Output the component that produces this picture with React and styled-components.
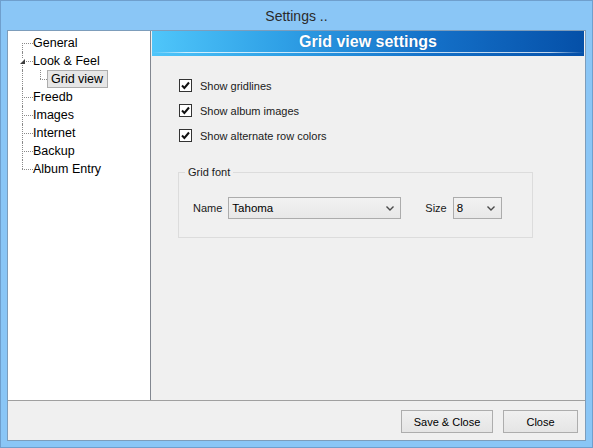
import React from 'react';
import styled, { createGlobalStyle } from 'styled-components';

const GlobalStyle = createGlobalStyle`
  html, body {
    margin: 0;
    padding: 0;
    background: #8ac6f6;
  }
  * {
    box-sizing: border-box;
  }
`;

const treeItems = [
  { label: 'General', first: true },
  { label: 'Look & Feel', expanded: true },
  { label: 'Grid view', child: true, selected: true },
  { label: 'Freedb' },
  { label: 'Images' },
  { label: 'Internet' },
  { label: 'Backup' },
  { label: 'Album Entry', last: true },
];

const options = ['Show gridlines', 'Show album images', 'Show alternate row colors'];

const Chevron = () => (
  <svg width="8" height="5" viewBox="0 0 8 5">
    <path d="M0.5 0.5 L4 4 L7.5 0.5" fill="none" stroke="#4a4a4a" strokeWidth="1.4" />
  </svg>
);

const Check = () => (
  <svg width="11" height="11" viewBox="0 0 11 11">
    <path d="M2 5.5 L4.4 8 L9 2.5" fill="none" stroke="#111" strokeWidth="2" />
  </svg>
);

const App = () => {
  return (
    <>
      <GlobalStyle />
      <Frame>
        <TitleBar>Settings ..</TitleBar>
        <Client>
          <Main>
            <Tree>
              {treeItems.map(item => (
                <TreeRow key={item.label}>
                  {item.child && <Guide />}
                  <Connector
                    $w={item.child ? 7 : 11}
                    $first={item.first}
                    $last={item.last || item.child}
                  >
                    {item.expanded && <Expander />}
                  </Connector>
                  <TreeLabel $selected={item.selected}>{item.label}</TreeLabel>
                </TreeRow>
              ))}
            </Tree>
            <Panel>
              <Header>Grid view settings</Header>
              <Body>
                <CheckList>
                  {options.map(o => (
                    <CheckRow key={o}>
                      <Box>
                        <Check />
                      </Box>
                      {o}
                    </CheckRow>
                  ))}
                </CheckList>
                <Group>
                  <Legend>Grid font</Legend>
                  <FieldRow>
                    <FieldLabel>Name</FieldLabel>
                    <Select $w={173}>
                      Tahoma
                      <Chevron />
                    </Select>
                    <FieldLabel $gap={24}>Size</FieldLabel>
                    <Select $w={49}>
                      8
                      <Chevron />
                    </Select>
                  </FieldRow>
                </Group>
              </Body>
            </Panel>
          </Main>
          <Footer>
            <Button $w={92}>Save &amp; Close</Button>
            <Button $w={75}>Close</Button>
          </Footer>
        </Client>
      </Frame>
    </>
  );
};

export default App;

const Frame = styled.div`
  width: 593px;
  height: 448px;
  background: #8ac6f6;
  border: 1px solid #6f9fcd;
  display: flex;
  flex-direction: column;
  font-family: 'Liberation Sans', Arial, sans-serif;
`;

const TitleBar = styled.div`
  height: 29px;
  padding-top: 2px;
  line-height: 27px;
  text-align: center;
  font-size: 14px;
  color: #2a2a2a;
`;

const Client = styled.div`
  flex: 1;
  margin: 0 6px 6px 6px;
  border: 1px solid #7d9dbb;
  background: #f0f0f0;
  display: flex;
  flex-direction: column;
`;

const Main = styled.div`
  height: 370px;
  display: flex;
  border-bottom: 1px solid #a0a0a0;
`;

const Tree = styled.div`
  width: 143px;
  flex: none;
  background: #fff;
  border-right: 1px solid #828790;
  padding-top: 3px;
  font-size: 12.5px;
  color: #000;
`;

const TreeRow = styled.div`
  height: 18px;
  display: flex;
  align-items: stretch;
  padding-left: 14px;
`;

const Guide = styled.span`
  width: 18px;
  flex: none;
  border-left: 1px dotted #8a8a8a;
`;

const Connector = styled.span`
  position: relative;
  width: ${p => p.$w}px;
  flex: none;

  &::before {
    content: '';
    position: absolute;
    left: 0;
    top: ${p => (p.$first ? '50%' : '0')};
    bottom: ${p => (p.$last ? '50%' : '0')};
    border-left: 1px dotted #8a8a8a;
  }

  &::after {
    content: '';
    position: absolute;
    left: 0;
    right: 0;
    top: 50%;
    border-top: 1px dotted #8a8a8a;
  }
`;

const Expander = styled.span`
  position: absolute;
  left: -3px;
  top: 6px;
  width: 7px;
  height: 7px;
  background: #fff;
  z-index: 1;

  &::after {
    content: '';
    position: absolute;
    left: 1px;
    top: 1px;
    border-style: solid;
    border-width: 0 0 5px 5px;
    border-color: transparent transparent #3c3c3c transparent;
  }
`;

const TreeLabel = styled.span`
  display: flex;
  align-items: center;
  height: 18px;
  padding: ${p => (p.$selected ? '0 4px 0 3px' : '0 2px 0 0')};
  border: 1px solid ${p => (p.$selected ? '#adadad' : 'transparent')};
  border-width: ${p => (p.$selected ? '1px' : '0')};
  background: ${p => (p.$selected ? '#e6e6e6' : 'transparent')};
  white-space: nowrap;
`;

const Panel = styled.div`
  flex: 1;
  display: flex;
  flex-direction: column;
  padding: 0 1px;
`;

const Header = styled.div`
  height: 25px;
  line-height: 22px;
  text-align: center;
  color: #fff;
  font-weight: bold;
  font-size: 16px;
  text-shadow: 0 0 1px rgba(0, 40, 100, 0.4);
  background:
    linear-gradient(
        to right,
        rgba(255, 255, 255, 0) 0%,
        rgba(255, 255, 255, 0.75) 8%,
        rgba(255, 255, 255, 0.75) 92%,
        rgba(255, 255, 255, 0) 100%
      )
      0 21px / 100% 1px no-repeat,
    linear-gradient(to right, #4fc6fa 0%, #2fa0e6 30%, #1470c8 65%, #0550a8 100%);
`;

const Body = styled.div`
  padding: 17px 0 0 26px;
  font-size: 11px;
  color: #1a1a1a;
`;

const CheckList = styled.div`
  display: flex;
  flex-direction: column;
`;

const CheckRow = styled.label`
  height: 25px;
  display: flex;
  align-items: center;
  gap: 8px;
  padding-left: 1px;
`;

const Box = styled.span`
  width: 13px;
  height: 13px;
  border: 1px solid #333;
  background: #fff;
  display: flex;
  align-items: center;
  justify-content: center;
`;

const Group = styled.fieldset`
  margin: 18px 0 0 0;
  width: 355px;
  border: 1px solid #dcdcdc;
  padding: 18px 10px 18px 14px;
`;

const Legend = styled.legend`
  padding: 0 3px;
  margin-left: -8px;
  font-size: 11px;
  line-height: 13px;
`;

const FieldRow = styled.div`
  display: flex;
  align-items: center;
`;

const FieldLabel = styled.span`
  margin-left: ${p => p.$gap || 0}px;
  margin-right: 6px;
`;

const Select = styled.div`
  width: ${p => p.$w}px;
  height: 22px;
  border: 1px solid #acacac;
  background: linear-gradient(to bottom, #f2f2f2, #e8e8e8);
  display: flex;
  align-items: center;
  justify-content: space-between;
  padding: 0 6px 0 3px;
  font-size: 11.5px;
  color: #000;
`;

const Footer = styled.div`
  flex: 1;
  display: flex;
  justify-content: flex-end;
  align-items: flex-start;
  gap: 10px;
  padding: 9px 7px 0 0;
`;

const Button = styled.button`
  width: ${p => p.$w}px;
  height: 23px;
  border: 1px solid #adadad;
  background: linear-gradient(to bottom, #f0f0f0, #e5e5e5);
  font-family: 'Liberation Sans', Arial, sans-serif;
  font-size: 11px;
  color: #000;
  padding: 0;
`;
